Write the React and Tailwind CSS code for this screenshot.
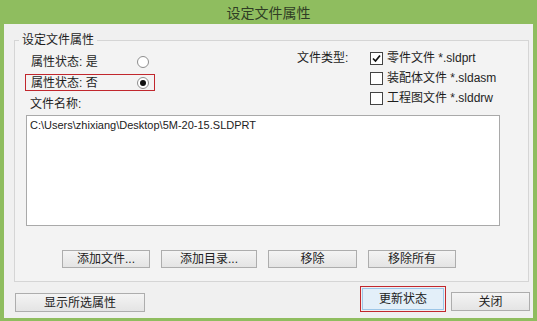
import React from 'react';

const FONT = "font-['Liberation_Sans','Noto_Sans_CJK_SC',sans-serif]";

const Radio = ({ checked }) => (
  <span className="w-[12px] h-[12px] rounded-full border border-[#8e8e8e] bg-white flex items-center justify-center">
    {checked && <span className="w-[6px] h-[6px] rounded-full bg-[#111]" />}
  </span>
);

const Check = ({ checked }) => (
  <span className="w-[13px] h-[13px] border border-[#444] bg-white flex items-center justify-center">
    {checked && (
      <svg width="11" height="11" viewBox="0 0 11 11">
        <polyline points="2,5.5 4.5,8 9,2.5" fill="none" stroke="#111" strokeWidth="1.7" />
      </svg>
    )}
  </span>
);

const Btn = ({ w, children, h = 'h-[18px]' }) => (
  <button
    className={`${w} ${h} border border-[#adadad] bg-gradient-to-b from-[#f4f4f4] to-[#e4e4e4] text-[12px] leading-none text-[#222] flex items-center justify-center`}
  >
    {children}
  </button>
);

const FILE_TYPES = [
  { label: '零件文件 *.sldprt', checked: true },
  { label: '装配体文件 *.sldasm', checked: false },
  { label: '工程图文件 *.slddrw', checked: false },
];

const App = () => {
  return (
    <div className={`w-[537px] h-[321px] bg-[#8fbd5f] flex flex-col ${FONT} text-[#1e1e1e]`}>
      {/* title bar */}
      <div className="h-[24px] flex items-center justify-center text-[14px] text-[#2f3d25] pt-[2px]">
        设定文件属性
      </div>

      <div className="flex-1 ml-[4px] mr-[4px] mb-[3px] bg-[#f0f0f0] flex flex-col">
        <fieldset className="ml-[10px] mr-[4px] mt-[8px] border border-[#d5d5d5] bg-[#f3f3f3] pb-[13px]">
          <legend className="ml-[4px] px-[3px] text-[12px] leading-[16px]">设定文件属性</legend>

          <div className="flex">
            {/* left column */}
            <div className="flex flex-col ml-[10px] mt-[5px] w-[130px]">
              <div className="h-[17px] flex items-center justify-between pl-[5px] pr-[5px] border border-transparent">
                <span className="text-[12px] leading-none">属性状态: 是</span>
                <Radio />
              </div>
              <div className="mt-[4px] h-[17px] flex items-center justify-between pl-[5px] pr-[5px] border border-[#c1272d]">
                <span className="text-[12px] leading-none">属性状态: 否</span>
                <Radio checked />
              </div>
              <div className="mt-[5px] h-[16px] pl-[5px] text-[12px] leading-[16px]">文件名称:</div>
            </div>

            {/* right column */}
            <div className="flex ml-[142px]">
              <div className="w-[73px] h-[20px] flex items-center text-[12px]">文件类型:</div>
              <div className="flex flex-col">
                {FILE_TYPES.map((t) => (
                  <div key={t.label} className="h-[20px] flex items-center gap-[4px] text-[12px]">
                    <Check checked={t.checked} />
                    <span className="leading-none">{t.label}</span>
                  </div>
                ))}
              </div>
            </div>
          </div>

          <div className="ml-[11px] mt-[3px] w-[474px] h-[111px] border border-[#a9a9a9] bg-white px-[3px] py-[2px] text-[11px] leading-[14px] text-[#222]">
            C:\Users\zhixiang\Desktop\5M-20-15.SLDPRT
          </div>

          <div className="flex mt-[24px] pl-[47px] gap-[11px]">
            <Btn w="w-[88px]">添加文件...</Btn>
            <Btn w="w-[96px]">添加目录...</Btn>
            <Btn w="w-[89px]">移除</Btn>
            <Btn w="w-[88px]">移除所有</Btn>
          </div>
        </fieldset>

        <div className="flex items-end mt-[4px] pl-[11px] pr-[3px]">
          <Btn w="w-[130px]" h="h-[19px]">显示所选属性</Btn>
          <div className="ml-auto border border-[#c1272d] p-[1px]">
            <button className="w-[82px] h-[22px] border border-[#9cc6e8] bg-[#e3eff9] text-[12px] leading-none text-[#222] flex items-center justify-center">
              更新状态
            </button>
          </div>
          <div className="ml-[5px] mb-[1px]">
            <Btn w="w-[79px]" h="h-[19px]">关闭</Btn>
          </div>
        </div>
      </div>
    </div>
  );
};

export default App;
